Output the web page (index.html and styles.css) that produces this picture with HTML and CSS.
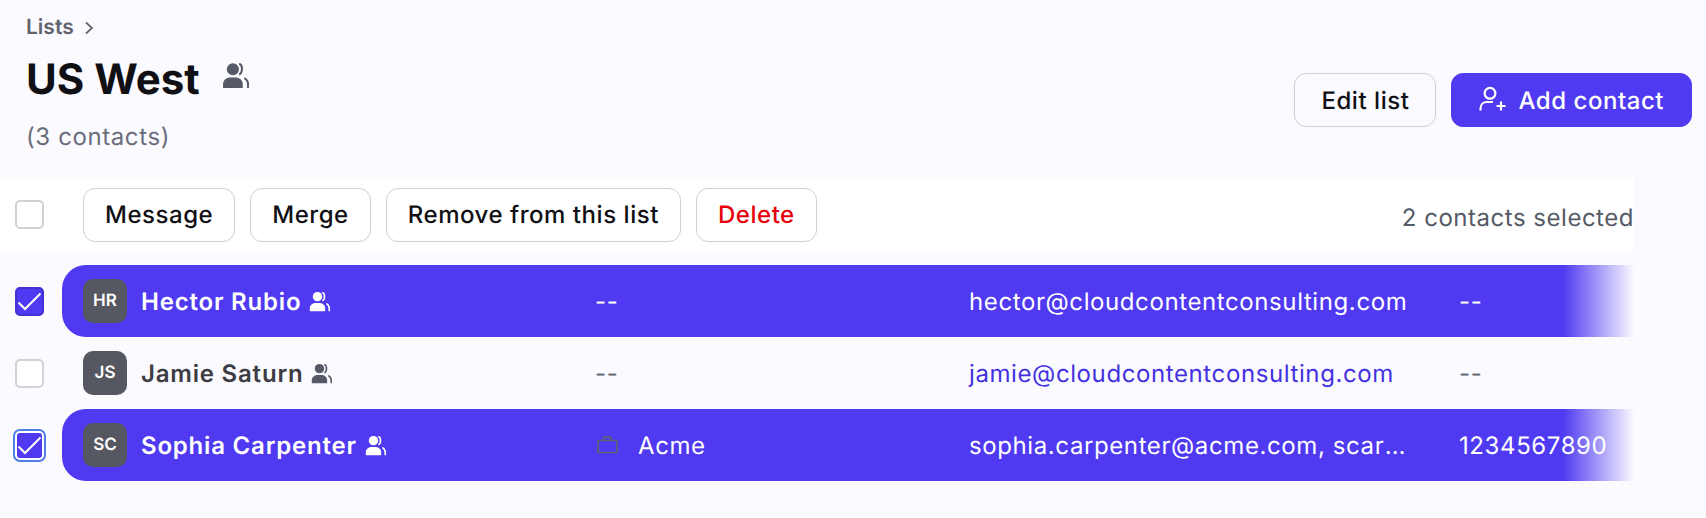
FILE: index.html
```html
<!DOCTYPE html>
<html lang="en">
<head>
<meta charset="utf-8">
<title>US West</title>
<link rel="stylesheet" href="styles.css">
</head>
<body>
<svg class="defs" width="0" height="0" aria-hidden="true">
  <symbol id="group" viewBox="0 0 26 26">
    <circle cx="10.5" cy="7" r="5.8" fill="currentColor"/>
    <path d="M1 25v-3.500C1 17.600 4.400 15 8 15h5c3.600 0 7 2.600 7 6.500V25z" fill="currentColor"/>
    <path d="M16.500 1.800c3.600 1 3.600 9 0 10.200M21.500 15.500c2.400 1.200 3.600 3.500 3.600 6.500v3" fill="none" stroke="currentColor" stroke-width="2"/>
  </symbol>
</svg>
<header class="page-head">
  <div class="head-left">
    <nav class="crumbs">
      <span>Lists</span>
      <svg class="chev" viewBox="0 0 12 16"><path d="M3 2.500 9 8l-6 5.500" fill="none" stroke="currentColor" stroke-width="1.700"/></svg>
    </nav>
    <div class="title-row">
      <h1>US West</h1>
      <svg class="title-icon"><use href="#group"/></svg>
    </div>
    <p class="count">(3 contacts)</p>
  </div>
  <div class="head-actions">
    <button class="btn edit">Edit list</button>
    <button class="btn primary">
      <svg class="add-icon" viewBox="0 0 28 28"><circle cx="11" cy="7.300" r="5.400" fill="none" stroke="currentColor" stroke-width="2.200"/><path d="M1.500 24.500v-2c0-4 3-6.500 6.500-6.500h6M22 15.500v9M17.500 20h9" fill="none" stroke="currentColor" stroke-width="2.200"/></svg>
      Add contact
    </button>
  </div>
</header>
<main class="table">
  <div class="toolbar">
    <span class="check"></span>
    <div class="tool-btns">
      <button class="btn">Message</button>
      <button class="btn">Merge</button>
      <button class="btn">Remove from this list</button>
      <button class="btn danger">Delete</button>
    </div>
    <span class="selected">2 contacts selected</span>
  </div>
  <div class="rows">
    <div class="row on">
      <span class="check checked"><svg viewBox="0 0 25 25"><path d="M1.500 13.500 8 20 23.500 4.500" fill="none" stroke="currentColor" stroke-width="2"/></svg></span>
      <div class="pill">
        <div class="who"><span class="avatar">HR</span><span class="name">Hector Rubio</span><svg class="mini"><use href="#group"/></svg></div>
        <div class="company">--</div>
        <div class="email">hector@cloudcontentconsulting.com</div>
        <div class="phone">--</div>
      </div>
    </div>
    <div class="row">
      <span class="check"></span>
      <div class="pill">
        <div class="who"><span class="avatar">JS</span><span class="name">Jamie Saturn</span><svg class="mini"><use href="#group"/></svg></div>
        <div class="company">--</div>
        <div class="email link">jamie@cloudcontentconsulting.com</div>
        <div class="phone">--</div>
      </div>
    </div>
    <div class="row on">
      <span class="check checked focus"><svg viewBox="0 0 25 25"><path d="M1.500 13.500 8 20 23.500 4.500" fill="none" stroke="currentColor" stroke-width="2"/></svg></span>
      <div class="pill">
        <div class="who"><span class="avatar">SC</span><span class="name">Sophia Carpenter</span><svg class="mini"><use href="#group"/></svg></div>
        <div class="company"><svg class="case" viewBox="0 0 21 18"><path d="M1 4.500h19v12H1zM6.500 4.500V2.800c0-.9.7-1.600 1.600-1.600h4.800c.9 0 1.600.7 1.600 1.600v1.700" fill="none" stroke="currentColor" stroke-width="1.700" stroke-linejoin="round"/></svg><span>Acme</span></div>
        <div class="email"><span class="clip">sophia.carpenter@acme.com, scarpenter@gmail.com</span></div>
        <div class="phone">1234567890</div>
      </div>
    </div>
    <div class="fade"></div>
  </div>
</main>
</body>
</html>
```
FILE: styles.css
```css
* { box-sizing: border-box; }
html, body { height: 100%; }
body {
  margin: 0;
  background: #fbfaff;
  font-family: Inter, "Liberation Sans", sans-serif;
  color: #101014;
  overflow: hidden;
  text-rendering: geometricPrecision;
  letter-spacing: 0.6px;
}
.defs { position: absolute; }
.page-head {
  display: flex;
  justify-content: space-between;
  align-items: flex-end;
  padding: 0 14px 0 26px;
  height: 178px;
}
.head-left { display: flex; flex-direction: column; }
.crumbs {
  display: flex;
  align-items: center;
  gap: 9px;
  font-size: 21px;
  font-weight: 600;
  line-height: 26px;
  color: #61646f;
  letter-spacing: 0;
}
.chev { width: 12px; height: 16px; }
.title-row { display: flex; align-items: center; gap: 22px; margin-top: 12px; }
h1 { margin: 0; font-size: 42px; font-weight: 700; line-height: 54px; letter-spacing: 0; }
.title-icon { width: 27px; height: 27px; color: #555a66; margin-top: -10px; }
.count { margin: 14px 0 0; font-size: 24px; line-height: 32px; color: #6a6e7c; padding-bottom: 25px; }
.head-actions { display: flex; gap: 15px; padding-bottom: 51px; }
.btn {
  display: inline-flex;
  align-items: center;
  height: 54px;
  padding: 0 21px;
  border: 1px solid #cfcfd6;
  border-radius: 12px;
  background: transparent;
  font-family: inherit;
  font-size: 24px;
  font-weight: 500;
  letter-spacing: 0.54px;
  text-rendering: geometricPrecision;
  color: #101014;
}
.edit { padding: 0 26px; }
.primary {
  background: #4f3af2;
  border-color: #4f3af2;
  color: #fff;
  gap: 11px;
  padding: 0 27px 0 27px;
}
.danger { color: #e7000b; }
.add-icon { width: 28px; height: 28px; }
.toolbar {
  display: flex;
  align-items: center;
  width: 1634px;
  height: 73px;
  padding-left: 15px;
  background: #fff;
}
.check {
  flex: none;
  display: block;
  width: 29px;
  height: 29px;
  border: 2px solid #d2d2d6;
  border-radius: 5px;
  background: #fff;
}
.tool-btns { display: flex; gap: 15px; margin-left: 39px; flex: 1; }
.selected { font-size: 24px; letter-spacing: 0.52px; color: #555a66; margin-top: 5px; }
.rows { position: relative; width: 1634px; margin-top: 14px; }
.row { display: flex; align-items: center; height: 72px; padding-left: 15px; }
.pill {
  display: flex;
  align-items: center;
  flex: 1;
  height: 72px;
  margin-left: 18px;
  padding-left: 21px;
  border-radius: 24px 0 0 24px;
  font-size: 24px;
  color: #61646f;
}
.on .pill { background: #4f3af2; color: #fff; }
.check.checked {
  background: #4f3af2;
  border-color: #4331d0;
  color: #fff;
  padding: 0;
}
.check svg { display: block; width: 25px; height: 25px; }
.check.focus { outline: 2px solid #4f7de8; outline-offset: 0; border-color: #fff; }
.who { display: flex; align-items: center; width: 512px; flex: none; }
.avatar {
  display: flex;
  align-items: center;
  justify-content: center;
  width: 44px;
  height: 44px;
  border-radius: 10px;
  background: #555861;
  color: #fff;
  font-size: 17px;
  font-weight: 600;
  letter-spacing: 0;
}
.name { margin-left: 14px; font-weight: 600; letter-spacing: 0.8px; color: #3d3c44; }
.on .name { color: #fff; }
.mini { width: 21px; height: 21px; margin-left: 8px; color: #555a66; }
.on .mini { color: #fff; }
.company { display: flex; align-items: center; width: 374px; flex: none; }
.case { width: 21px; height: 18px; margin: 0 20px 0 2px; color: #5f6070; }
.email { width: 490px; flex: none; }
.link { color: #4331e0; }
.clip {
  display: block;
  width: 441px;
  overflow: hidden;
  white-space: nowrap;
  text-overflow: ellipsis;
}
.fade {
  position: absolute;
  top: 0;
  right: 0;
  bottom: 0;
  width: 71px;
  background: linear-gradient(to right, rgba(251, 250, 255, 0), rgba(251, 250, 255, 1));
}
```
